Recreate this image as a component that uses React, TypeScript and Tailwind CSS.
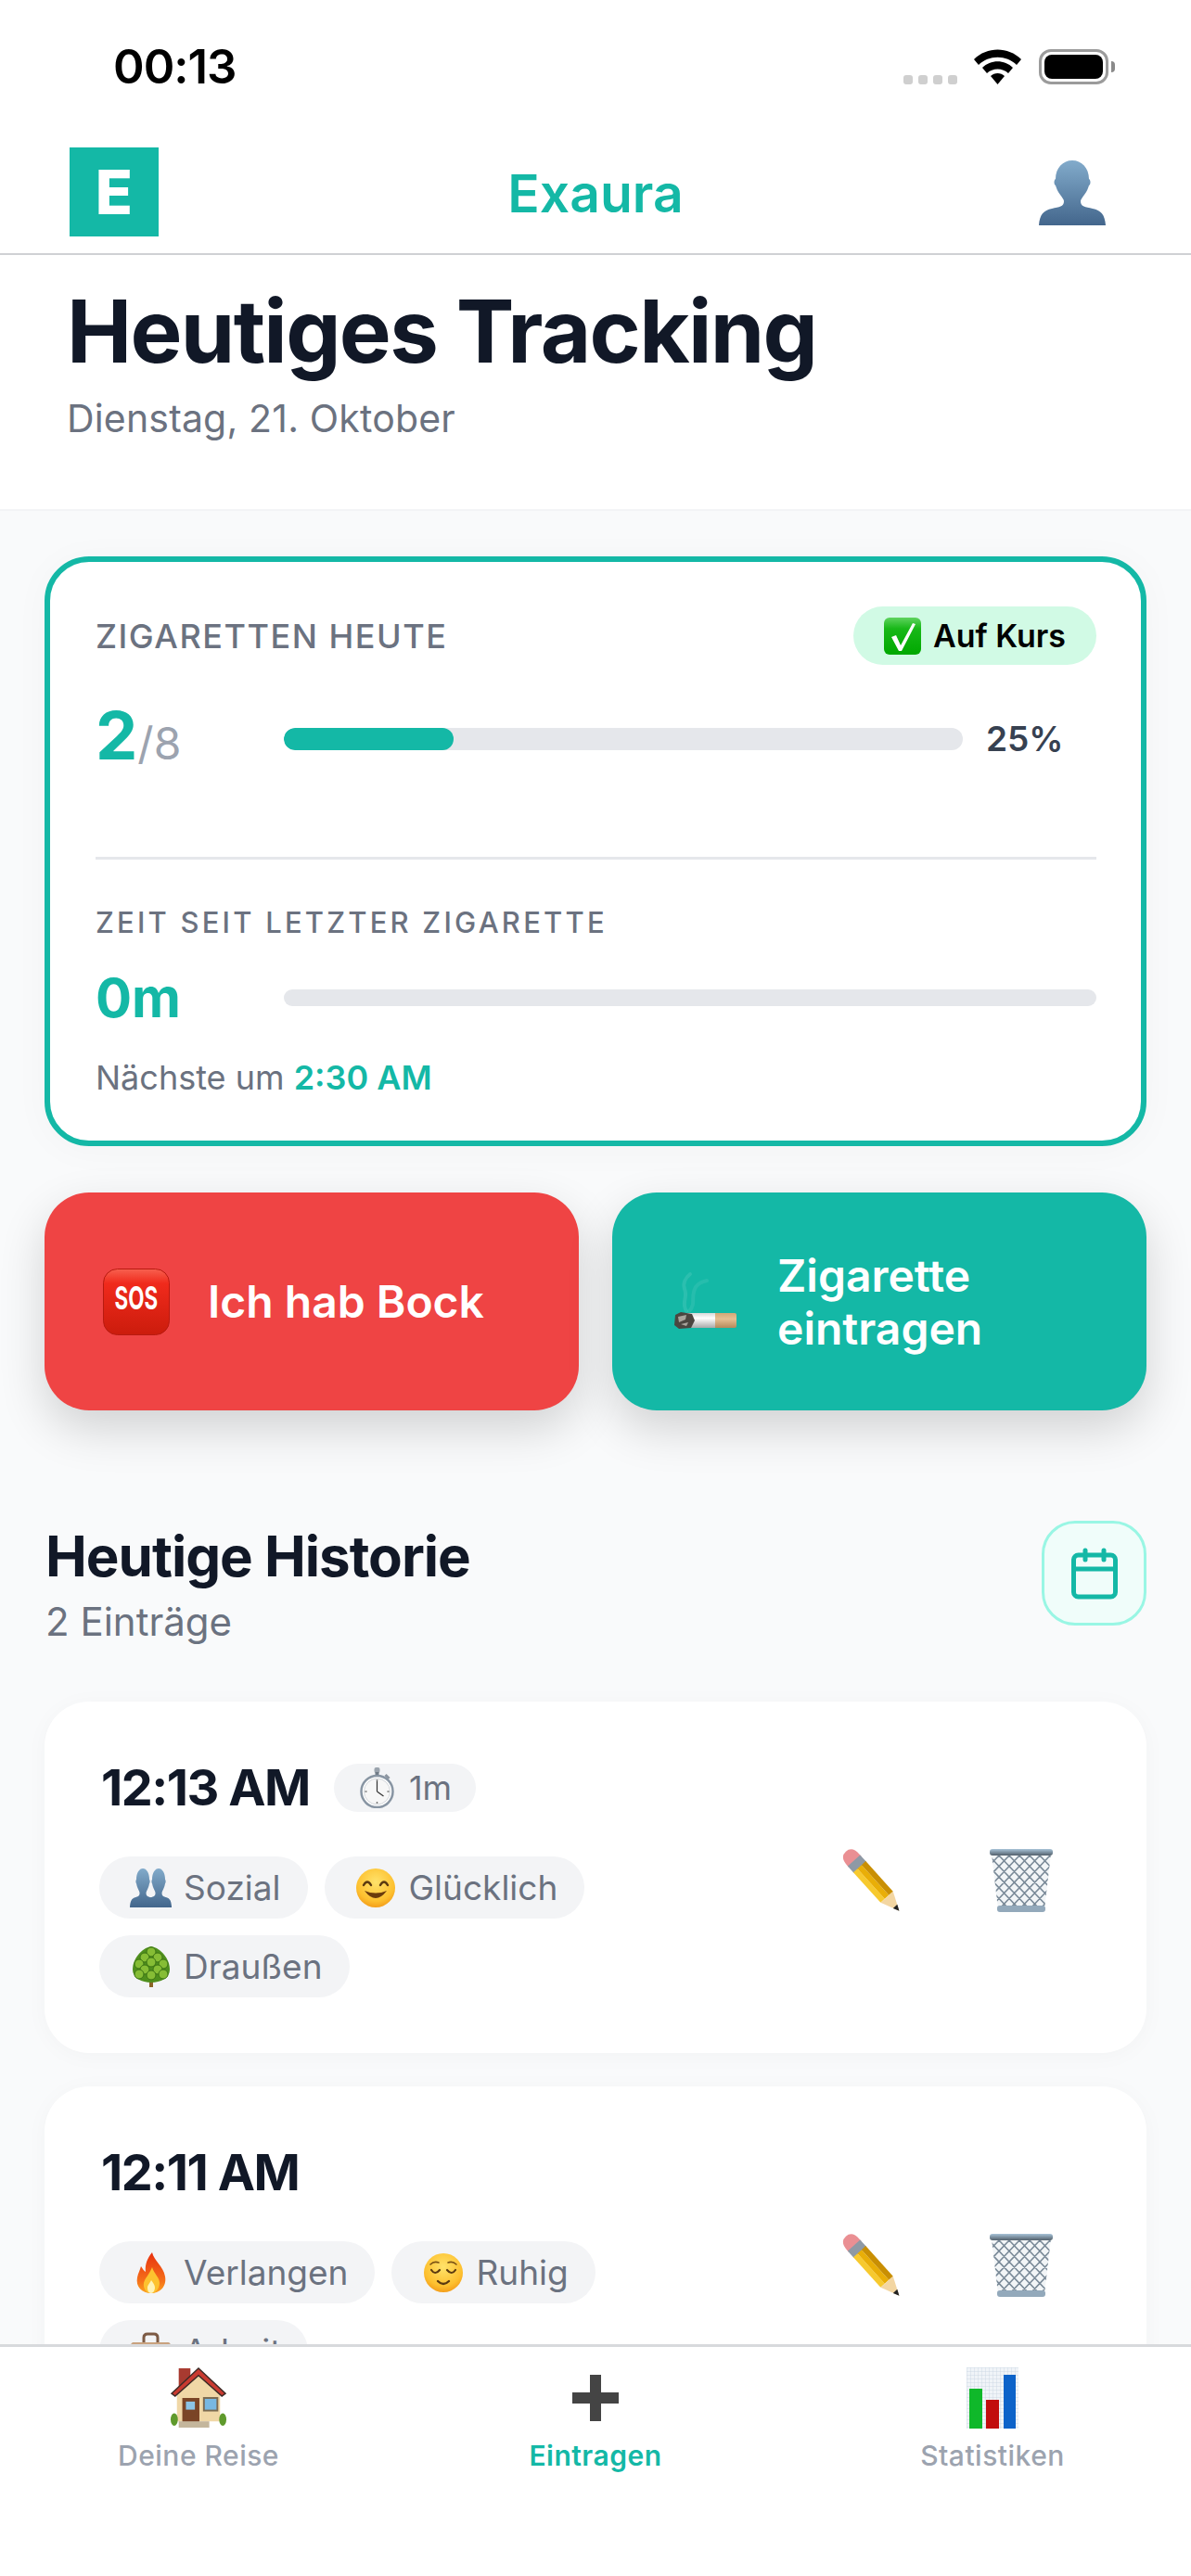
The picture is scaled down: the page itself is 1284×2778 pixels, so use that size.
import { Calendar } from "lucide-react";
import type { ReactNode } from "react";

const bust =
  "M0 70C1 58 5 54 14 52C22 50 27 50 27 44C27 42 25 40 23 37C20 33 19 30 18 27C16 26 16 21 18 20C18 8 26 0 36 0C46 0 54 8 54 20C56 21 56 26 54 27C53 30 52 33 49 37C47 40 45 42 45 44C45 50 50 50 58 52C67 54 71 58 72 70Z";

function BustGradient() {
  return (
    <linearGradient id="bust" x1="0" y1="0" x2="0" y2="1">
      <stop offset="0" stopColor="#82abcb" />
      <stop offset="1" stopColor="#43668c" />
    </linearGradient>
  );
}

function PersonIcon() {
  return (
    <svg width="72" height="70" viewBox="0 0 72 70">
      <defs>
        <BustGradient />
      </defs>
      <path d={bust} fill="url(#bust)" />
    </svg>
  );
}

function BustsIcon() {
  return (
    <svg width="45" height="42" viewBox="0 0 45 42">
      <defs>
        <BustGradient />
      </defs>
      <path d={bust} fill="url(#bust)" transform="translate(17 0) scale(0.39 0.6)" />
      <path d={bust} fill="url(#bust)" transform="translate(0 0) scale(0.39 0.6)" />
    </svg>
  );
}

function CheckIcon() {
  return (
    <svg width="40" height="40" viewBox="0 0 40 40">
      <defs>
        <linearGradient id="chk" x1="0" y1="0" x2="0" y2="1">
          <stop offset="0" stopColor="#5fd35f" />
          <stop offset="0.3" stopColor="#18b818" />
          <stop offset="1" stopColor="#00a800" />
        </linearGradient>
      </defs>
      <rect width="40" height="40" rx="6" fill="url(#chk)" />
      <path d="M8 21L13 19L18 30L31 6L34 7L19 36L16 36Z" fill="#fff" />
    </svg>
  );
}

function SosIcon() {
  return (
    <svg width="72" height="72" viewBox="0 0 72 72">
      <defs>
        <linearGradient id="sos" x1="0" y1="0" x2="0" y2="1">
          <stop offset="0" stopColor="#f7604f" />
          <stop offset="0.22" stopColor="#f02a1c" />
          <stop offset="1" stopColor="#cb1c0c" />
        </linearGradient>
      </defs>
      <rect x="0.5" y="0.5" width="71" height="71" rx="15" fill="url(#sos)" stroke="#b81a10" />
      <text
        x="36"
        y="38"
        textAnchor="middle"
        fontFamily="Inter, sans-serif"
        fontWeight="700"
        fontSize="28"
        fill="#fff"
        transform="translate(7 -2) scale(0.8 1.22)"
      >
        SOS
      </text>
    </svg>
  );
}

function CigaretteIcon() {
  return (
    <svg width="72" height="72" viewBox="0 0 72 72">
      <defs>
        <linearGradient id="paper" x1="0" y1="0" x2="0" y2="1">
          <stop offset="0" stopColor="#d9d9d9" />
          <stop offset="0.35" stopColor="#ffffff" />
          <stop offset="1" stopColor="#a9a9a9" />
        </linearGradient>
        <linearGradient id="filter" x1="0" y1="0" x2="0" y2="1">
          <stop offset="0" stopColor="#d3a878" />
          <stop offset="0.4" stopColor="#e6bf92" />
          <stop offset="1" stopColor="#b48a5c" />
        </linearGradient>
      </defs>
      <path d="M14 46C8 36 16 32 12 22C10 16 13 10 18 6" fill="none" stroke="#fff" strokeOpacity="0.1" strokeWidth="4" strokeLinecap="round" />
      <path d="M17 46C25 38 18 30 24 20C27 16 31 14 36 13" fill="none" stroke="#fff" strokeOpacity="0.08" strokeWidth="4" strokeLinecap="round" />
      <rect x="14" y="48" width="31" height="16" fill="url(#paper)" />
      <path d="M45 48H66Q68 48 68 50V62Q68 64 66 64H45Z" fill="url(#filter)" />
      <path d="M2 50L8 47L20 49L23 56L19 64L6 65L1 61Z" fill="#4b4640" />
      <path d="M5 52L14 50L13 55L6 58ZM8 60L16 58L14 62Z" fill="#a9a49c" />
    </svg>
  );
}

function StopwatchIcon() {
  return (
    <svg width="37" height="44" viewBox="0 0 36 44">
      <rect x="15" y="0" width="6" height="6" rx="2" fill="#9aa3ad" />
      <rect x="16" y="5" width="4" height="5" fill="#6f7a86" />
      <path d="M27 8L31 12" stroke="#8d96a0" strokeWidth="3" />
      <circle cx="18" cy="26" r="17" fill="#fff" stroke="#8895a3" strokeWidth="2.5" />
      <circle cx="18" cy="26" r="14" fill="#f7f7f7" stroke="#d4d8dc" />
      <path d="M18 26L18 15M18 26L25 31" stroke="#333" strokeWidth="1.2" />
      <path d="M18 13V15M18 37V39M5 26H7M29 26H31" stroke="#777" strokeWidth="1.5" />
    </svg>
  );
}

function SmileIcon() {
  return (
    <svg width="42" height="42" viewBox="0 0 42 42">
      <defs>
        <radialGradient id="face" cx="0.5" cy="0.35" r="0.75">
          <stop offset="0" stopColor="#ffe36b" />
          <stop offset="0.65" stopColor="#fdc02f" />
          <stop offset="1" stopColor="#ee8a0f" />
        </radialGradient>
      </defs>
      <circle cx="21" cy="21" r="21" fill="url(#face)" />
      <path d="M8 18Q12 11 16 18M26 18Q30 11 34 18" fill="none" stroke="#5b3a10" strokeWidth="2.4" strokeLinecap="round" />
      <path d="M9 24Q21 40 33 24Q21 29 9 24Z" fill="#6b3c0c" />
    </svg>
  );
}

function RelievedIcon() {
  return (
    <svg width="42" height="42" viewBox="0 0 42 42">
      <defs>
        <radialGradient id="face2" cx="0.5" cy="0.35" r="0.75">
          <stop offset="0" stopColor="#ffe36b" />
          <stop offset="0.65" stopColor="#fdc02f" />
          <stop offset="1" stopColor="#ee8a0f" />
        </radialGradient>
      </defs>
      <circle cx="21" cy="21" r="21" fill="url(#face2)" />
      <path d="M7 12Q11 8 16 10M26 10Q31 8 35 12" fill="none" stroke="#7a5214" strokeWidth="1.6" strokeLinecap="round" />
      <path d="M8 18Q12 24 17 18M25 18Q30 24 34 18" fill="none" stroke="#5b3a10" strokeWidth="2.2" strokeLinecap="round" />
      <path d="M15 30Q21 36 27 30" fill="none" stroke="#5b3a10" strokeWidth="2.4" strokeLinecap="round" />
    </svg>
  );
}

function TreeIcon() {
  const dots = [
    [21, 6],
    [14, 12],
    [28, 12],
    [8, 19],
    [21, 17],
    [34, 19],
    [14, 25],
    [28, 25],
    [21, 31],
    [8, 30],
    [34, 30],
  ];
  return (
    <svg width="42" height="44" viewBox="0 0 42 44">
      <rect x="19" y="34" width="4" height="10" fill="#8a6426" />
      <path d="M21 0C32 2 41 14 41 25C41 34 31 39 21 39C11 39 1 34 1 25C1 14 10 2 21 0Z" fill="#4f8f1d" />
      {dots.map(([x, y]) => (
        <circle key={`${x}-${y}`} cx={x} cy={y} r="5" fill="#86bd35" stroke="#3c7414" strokeWidth="1" />
      ))}
    </svg>
  );
}

function FireIcon() {
  return (
    <svg width="40" height="44" viewBox="0 0 40 44">
      <defs>
        <linearGradient id="fire" x1="0" y1="0" x2="0" y2="1">
          <stop offset="0" stopColor="#e8300f" />
          <stop offset="0.7" stopColor="#f5701a" />
          <stop offset="1" stopColor="#fba31f" />
        </linearGradient>
      </defs>
      <path d="M21 0C23 9 33 15 35 26C37 37 29 44 20 44C10 44 3 37 5 27C6 22 8 19 9 15C11 18 12 20 14 21C13 13 16 6 21 0Z" fill="url(#fire)" />
      <path d="M21 16C23 23 29 27 29 33C29 39 25 44 20 44C15 44 11 39 12 33C13 28 18 24 21 16Z" fill="#fdc22f" />
      <path d="M20 30C22 33 24 35 24 38C24 41 22 44 20 44C17 44 16 41 16 38C16 35 19 33 20 30Z" fill="#fff3b8" />
    </svg>
  );
}

function BriefcaseIcon() {
  return (
    <svg width="45" height="42" viewBox="0 0 45 42">
      <path d="M15 12V6Q15 2 19 2H26Q30 2 30 6V12" fill="none" stroke="#7c5a44" strokeWidth="3" />
      <rect x="1" y="11" width="43" height="30" rx="4" fill="#a9825f" />
      <rect x="1" y="11" width="43" height="13" rx="4" fill="#c9a27e" />
    </svg>
  );
}

function PencilIcon() {
  return (
    <svg width="72" height="72" viewBox="0 0 72 72">
      <g transform="rotate(-42 36 36)">
        <path d="M27 6Q27 -6 36 -6Q45 -6 45 6V9H27Z" fill="#ea8f93" />
        <rect x="27" y="7" width="18" height="10" fill="#8e99a5" />
        <rect x="27" y="16" width="6" height="44" fill="#f7c92e" />
        <rect x="33" y="16" width="6" height="44" fill="#e9ae07" />
        <rect x="39" y="16" width="6" height="44" fill="#c98f03" />
        <path d="M27 60H45L36 80Z" fill="#f3d6a2" />
        <path d="M33 73.5H39L36 80Z" fill="#222" />
      </g>
    </svg>
  );
}

function TrashIcon() {
  const lines = [];
  for (let i = -4; i < 9; i++) {
    lines.push(`M${i * 11} 8L${i * 11 + 55} 66`, `M${i * 11 + 55} 8L${i * 11} 66`);
  }
  return (
    <svg width="70" height="70" viewBox="0 0 70 70">
      <defs>
        <clipPath id="bin">
          <path d="M3 6H67L60 66H10Z" />
        </clipPath>
        <linearGradient id="rim" x1="0" y1="0" x2="0" y2="1">
          <stop offset="0" stopColor="#a8c3d8" />
          <stop offset="1" stopColor="#53606b" />
        </linearGradient>
      </defs>
      <path d="M3 6H67L60 66H10Z" fill="#f2f5f7" />
      <path d={lines.join("")} clipPath="url(#bin)" stroke="#7a8a98" strokeWidth="1.6" fill="none" />
      <rect x="1" y="1" width="68" height="7" rx="3" fill="url(#rim)" />
      <rect x="9" y="62" width="52" height="7" rx="3" fill="#93a9bb" />
    </svg>
  );
}

function HouseIcon() {
  return (
    <svg width="62" height="68" viewBox="0 0 64 68">
      <rect x="10" y="1" width="13" height="24" fill="#a83a30" />
      <path d="M8 30L32 6L56 30V60H8Z" fill="#f0d7a6" />
      <path d="M2 29L32 1L62 29L58 32L32 9L6 32Z" fill="#c93a30" stroke="#3d2a26" strokeWidth="1.5" />
      <rect x="14" y="34" width="19" height="27" fill="#7a4426" />
      <rect x="18" y="38" width="10" height="9" fill="#8cc4e6" />
      <rect x="37" y="33" width="17" height="16" fill="#7b6a50" />
      <rect x="39" y="35" width="13" height="12" fill="#78b8e2" />
      <ellipse cx="5" cy="58" rx="4" ry="7" fill="#5f9a2c" />
      <ellipse cx="59" cy="58" rx="4" ry="7" fill="#5f9a2c" />
      <rect x="10" y="60" width="34" height="7" fill="#c4b69c" />
    </svg>
  );
}

function PlusIcon() {
  return (
    <svg width="50" height="50" viewBox="0 0 50 50">
      <rect x="19" y="0" width="12" height="50" fill="#444" />
      <rect x="0" y="19" width="50" height="12" fill="#444" />
    </svg>
  );
}

function ChartIcon() {
  return (
    <svg width="56" height="66" viewBox="0 0 56 66">
      <defs>
        <pattern id="grid" width="4" height="4" patternUnits="userSpaceOnUse">
          <rect width="4" height="4" fill="#f0f4f8" />
          <path d="M4 0H0V4" fill="none" stroke="#c9d5e2" strokeWidth="0.8" />
        </pattern>
      </defs>
      <rect width="56" height="66" fill="url(#grid)" />
      <rect x="3" y="23" width="14" height="43" fill="#0fb82a" />
      <rect x="21" y="35" width="14" height="31" fill="#c20d0d" />
      <rect x="40" y="8" width="13" height="58" fill="#0d63c9" />
    </svg>
  );
}

function StatusBar() {
  return (
    <div className="flex h-[132px] shrink-0 items-start justify-between pl-[122px] pr-[82px] pt-[47px]">
      <span className="text-[51px] leading-[50px] font-semibold tracking-[-1px] text-black">00:13</span>
      <div className="flex items-start pt-[6px]">
        <div className="mt-[28px] flex gap-[6px]">
          <div className="h-[10px] w-[10px] rounded-[3px] bg-[#cfcfcf]" />
          <div className="h-[10px] w-[10px] rounded-[3px] bg-[#cfcfcf]" />
          <div className="h-[10px] w-[10px] rounded-[3px] bg-[#cfcfcf]" />
          <div className="h-[10px] w-[10px] rounded-[3px] bg-[#cfcfcf]" />
        </div>
        <svg className="ml-[18px]" width="51" height="38" viewBox="0 0 51 38">
          <path d="M0 11C14 -3 37 -3 51 11L46 17C35 6 16 6 5 17Z" fill="#000" />
          <path d="M9 20C18 11 33 11 42 20L37 26C31 20 20 20 14 26Z" fill="#000" />
          <path d="M18 29C22 25 29 25 33 29L25.5 38Z" fill="#000" />
        </svg>
        <div className="ml-[19px] flex items-center">
          <div className="h-[38px] w-[75px] rounded-[13px] border-[3px] border-[#9b9b9b] p-[3px]">
            <div className="h-full w-full rounded-[8px] bg-black" />
          </div>
          <div className="ml-[3px] h-[12px] w-[4px] rounded-r-full bg-[#8a8a8a]" />
        </div>
      </div>
    </div>
  );
}

function Header() {
  return (
    <header className="flex h-[143px] shrink-0 items-start justify-between border-b-[2px] border-[#cfd1d4] pl-[75px] pr-[92px] pt-[27px]">
      <div className="flex h-[96px] w-[96px] items-center justify-center bg-[#14b8a6] text-[66px] leading-none font-extrabold text-white">
        E
      </div>
      <span className="mr-[7px] mt-[18px] text-[57px] leading-[64px] font-semibold text-[#14b8a6]">Exaura</span>
      <div className="mt-[14px]">
        <PersonIcon />
      </div>
    </header>
  );
}

function Chip({ icon, label }: { icon: ReactNode; label: string }) {
  return (
    <div className="flex h-[67px] items-center gap-[13px] rounded-full bg-[#f3f4f6] pl-[33px] pr-[29px] text-[37px] text-[#6b7280]">
      <div className="flex w-[45px] justify-center">{icon}</div>
      <span>{label}</span>
    </div>
  );
}

function Entry({
  time,
  since,
  chips,
}: {
  time: string;
  since?: string;
  chips: { icon: ReactNode; label: string }[];
}) {
  return (
    <div className="flex shrink-0 items-center rounded-[48px] bg-white pb-[60px] pl-[59px] pr-[100px] pt-[67px] shadow-[0_3px_24px_rgba(0,0,0,0.03)]">
      <div className="w-[720px]">
        <div className="flex h-[52px] items-center gap-[26px]">
          <span className="pl-[2px] text-[54px] leading-[52px] font-bold tracking-[-1.5px] text-[#111827]">{time}</span>
          {since && (
            <div className="flex h-[52px] items-center gap-[16px] rounded-full bg-[#f3f4f6] pl-[28px] pr-[26px] text-[36px] text-[#6b7280]">
              <StopwatchIcon />
              <span>{since}</span>
            </div>
          )}
        </div>
        <div className="mt-[48px] flex flex-wrap gap-[18px]">
          {chips.map((c) => (
            <Chip key={c.label} icon={c.icon} label={c.label} />
          ))}
        </div>
      </div>
      <div className="ml-auto flex items-center gap-[90px]">
        <PencilIcon />
        <TrashIcon />
      </div>
    </div>
  );
}

function NavItem({ icon, label, active }: { icon: ReactNode; label: string; active?: boolean }) {
  return (
    <div className="flex flex-col items-center">
      <div className="flex h-[68px] items-center justify-center">{icon}</div>
      <span
        className={
          active
            ? "mt-[10px] text-[30px] leading-[36px] font-semibold tracking-[0.5px] text-[#14b8a6]"
            : "mt-[10px] text-[30px] leading-[36px] font-medium tracking-[0.5px] text-[#9ca3af]"
        }
      >
        {label}
      </span>
    </div>
  );
}

export default function App() {
  return (
    <div className="flex h-[2778px] w-[1284px] flex-col overflow-hidden bg-white font-['Inter',sans-serif]">
      <StatusBar />
      <Header />

      <main className="flex min-h-0 flex-1 flex-col overflow-hidden bg-[#f9fafb]">
        {/* Title */}
        <section className="shrink-0 border-b-[2px] border-[#f3f4f6] bg-white px-[72px] pb-[73px] pt-[28px]">
          <h1 className="text-[94px] leading-[108px] font-bold tracking-[-1.7px] text-[#111827]">Heutiges Tracking</h1>
          <p className="mt-[15px] text-[41px] leading-[50px] tracking-[0.17px] text-[#6b7280]">Dienstag, 21. Oktober</p>
        </section>

        <div className="flex flex-col px-[48px] pt-[49px]">
          {/* Tracker card */}
          <section className="shrink-0 rounded-[48px] border-[6px] border-[#14b8a6] bg-white pb-[46px] pl-[49px] pr-[48px] pt-[48px] shadow-[0_4px_40px_rgba(0,0,0,0.03)]">
            <div className="flex h-[63px] items-center justify-between">
              <span className="text-[36px] font-medium tracking-[1.5px] text-[#6b7280]">ZIGARETTEN HEUTE</span>
              <div className="flex h-[63px] items-center gap-[13px] rounded-full bg-[#d1fae5] px-[33px] text-[34px] font-semibold text-black">
                <CheckIcon />
                <span>Auf Kurs</span>
              </div>
            </div>

            <div className="mt-[44px] flex h-[72px] items-center">
              <div className="w-[203px] shrink-0">
                <span className="text-[72px] leading-[72px] font-bold text-[#14b8a6]">2</span>
                <span className="text-[48px] text-[#9ca3af]">/8</span>
              </div>
              <div className="h-[24px] flex-1 overflow-hidden rounded-full bg-[#e5e7eb]">
                <div className="h-full w-1/4 rounded-full bg-[#14b8a6]" />
              </div>
              <span className="w-[144px] shrink-0 pl-[25px] text-[37px] font-semibold text-[#374151]">25%</span>
            </div>

            <div className="mt-[91px] h-[3px] bg-[#e5e7eb]" />

            <div className="mt-[48px] text-[31px] leading-[40px] font-medium tracking-[3.2px] text-[#6b7280]">
              ZEIT SEIT LETZTER ZIGARETTE
            </div>

            <div className="mt-[25px] flex h-[72px] items-center">
              <span className="w-[203px] shrink-0 text-[58px] leading-[72px] font-bold text-[#14b8a6]">0m</span>
              <div className="h-[18px] flex-1 rounded-full bg-[#e5e7eb]" />
            </div>

            <p className="mt-[28px] text-[36px] leading-[44px] text-[#6b7280]">
              Nächste um <span className="font-semibold text-[#14b8a6]">2:30 AM</span>
            </p>
          </section>

          {/* Actions */}
          <div className="mt-[50px] grid shrink-0 grid-cols-2 gap-[36px]">
            <div className="flex h-[235px] items-center gap-[41px] rounded-[48px] bg-[#ef4444] pl-[63px] text-[48px] font-semibold text-white shadow-[0_20px_50px_rgba(0,0,0,0.16)]">
              <SosIcon />
              <span>Ich hab Bock</span>
            </div>
            <div className="flex h-[235px] items-center gap-[40px] rounded-[48px] bg-[#14b8a6] pl-[66px] text-[48px] leading-[57px] font-semibold text-white shadow-[0_20px_50px_rgba(0,0,0,0.16)]">
              <CigaretteIcon />
              <span>
                Zigarette
                <br />
                eintragen
              </span>
            </div>
          </div>

          {/* History */}
          <div className="mt-[119px] flex shrink-0 items-start justify-between">
            <div className="pl-[1px] pt-[2px]">
              <h2 className="text-[60px] leading-[72px] font-bold tracking-[-1px] text-[#111827]">Heutige Historie</h2>
              <p className="mt-[10px] text-[42px] leading-[50px] text-[#6b7280]">2 Einträge</p>
            </div>
            <div className="flex h-[113px] w-[113px] items-center justify-center rounded-[36px] border-[3px] border-[#99f6e4] bg-[#f0fdfa] text-[#14b8a6]">
              <Calendar size={60} strokeWidth={2} />
            </div>
          </div>

          <div className="mt-[61px] flex flex-col gap-[36px]">
            <Entry
              time="12:13 AM"
              since="1m"
              chips={[
                { icon: <BustsIcon />, label: "Sozial" },
                { icon: <SmileIcon />, label: "Glücklich" },
                { icon: <TreeIcon />, label: "Draußen" },
              ]}
            />
            <Entry
              time="12:11 AM"
              chips={[
                { icon: <FireIcon />, label: "Verlangen" },
                { icon: <RelievedIcon />, label: "Ruhig" },
                { icon: <BriefcaseIcon />, label: "Arbeit" },
              ]}
            />
          </div>
        </div>
      </main>

      {/* Bottom nav */}
      <nav className="grid h-[250px] shrink-0 grid-cols-3 border-t-[3px] border-[#d8dadd] bg-white pt-[21px]">
        <NavItem icon={<HouseIcon />} label="Deine Reise" />
        <NavItem icon={<PlusIcon />} label="Eintragen" active />
        <NavItem icon={<ChartIcon />} label="Statistiken" />
      </nav>
    </div>
  );
}
